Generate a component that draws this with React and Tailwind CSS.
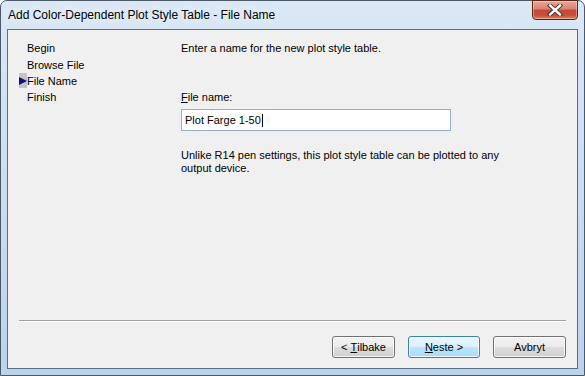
import React from 'react';

const STEPS = ['Begin', 'Browse File', 'File Name', 'Finish'];
const CURRENT = 'File Name';

function CloseButton() {
  return (
    <div className="mt-[-1px] flex h-[20px] w-[46px] items-center justify-center rounded-b-[4px] border border-[#5a2318] bg-[linear-gradient(#e9a697_0%,#d9826f_45%,#c24a34_50%,#c9503b_80%,#e0826a_100%)] shadow-[inset_0_0_0_1px_rgba(255,255,255,0.35)]">
      <svg width="16" height="12" viewBox="0 0 16 12">
        <path d="M3 1.5 L13 10.5 M13 1.5 L3 10.5" stroke="#3b2a2a" strokeWidth="4.2" strokeLinecap="square" />
        <path d="M3 1.5 L13 10.5 M13 1.5 L3 10.5" stroke="#ffffff" strokeWidth="2.4" strokeLinecap="square" />
      </svg>
    </div>
  );
}

function WinButton({ children, primary }) {
  const base = 'flex h-[22px] items-center justify-center rounded-[3px] border text-[11px] text-black shadow-[inset_0_0_0_1px_rgba(255,255,255,0.8)]';
  const look = primary
    ? 'border-[#3c7fb1] bg-[linear-gradient(#eaf6fd_0%,#d9f0fc_50%,#bee6fd_50%,#a7d9f5_100%)]'
    : 'border-[#707070] bg-[linear-gradient(#f2f2f2_0%,#ebebeb_50%,#dddddd_50%,#cfcfcf_100%)]';
  return <div className={`${base} ${look}`}>{children}</div>;
}

export default function App() {
  return (
    <div className="h-[376px] w-[585px] overflow-hidden bg-white font-['Liberation_Sans',Arial,sans-serif]">
      <div className="flex h-full w-full flex-col rounded-t-[7px] border border-[#4a5868] bg-[linear-gradient(180deg,#dbe8f6_0%,#cddff2_40%,#bcd3ec_100%)]">
        <div className="flex h-[28px] shrink-0 items-start justify-between pr-[6px]">
          <div className="pl-[7px] pt-[6px] text-[12px] leading-[16px] text-black [text-shadow:0_0_8px_rgba(255,255,255,0.9)]">
            Add Color-Dependent Plot Style Table - File Name
          </div>
          <CloseButton />
        </div>

        <div className="mx-[6px] mb-[6px] flex flex-1 flex-col border border-[#5b6d80] bg-[#f0f0f0] text-[11px] text-black">
          <div className="flex flex-1 pt-[10px]">
            <div className="w-[173px] shrink-0 pl-[11px]">
              {STEPS.map((s) => (
                <div key={s} className="flex h-[16.4px] items-center">
                  <div className={`flex h-[15px] w-[8px] items-center justify-center ${s === CURRENT ? 'bg-[#c4c4c4]' : ''}`}>
                    {s === CURRENT && (
                      <svg width="8" height="8" viewBox="0 0 8 8">
                        <path d="M0 0 L8 4 L0 8 Z" fill="#10107e" />
                      </svg>
                    )}
                  </div>
                  <span className="leading-[16px]">{s}</span>
                </div>
              ))}
            </div>

            <div className="flex flex-col">
              <div className="leading-[16px]">Enter a name for the new plot style table.</div>
              <div className="mt-[33px] leading-[16px]">
                <span className="underline underline-offset-[1px]">F</span>ile name:
              </div>
              <div className="mt-[4px] flex h-[22px] w-[270px] items-center border border-[#8fb0d6] bg-white pl-[3px]">
                <span>Plot Farge 1-50</span>
                <span className="ml-[1px] h-[13px] w-[1px] bg-black" />
              </div>
              <div className="mt-[18px] w-[330px] leading-[13px]">
                Unlike R14 pen settings, this plot style table can be plotted to any output device.
              </div>
            </div>
          </div>

          <div className="mx-[11px] h-[2px] border-t border-b border-t-[#a0a0a0] border-b-white" />

          <div className="flex justify-end gap-[13px] pb-[10px] pr-[11px] pt-[14px]">
            <div className="w-[63px]">
              <WinButton>
                &lt; <span className="ml-[3px] underline">T</span>ilbake
              </WinButton>
            </div>
            <div className="w-[72px]">
              <WinButton primary>
                <span className="underline">N</span>este &gt;
              </WinButton>
            </div>
            <div className="w-[73px]">
              <WinButton>Avbryt</WinButton>
            </div>
          </div>
        </div>
      </div>
    </div>
  );
}
